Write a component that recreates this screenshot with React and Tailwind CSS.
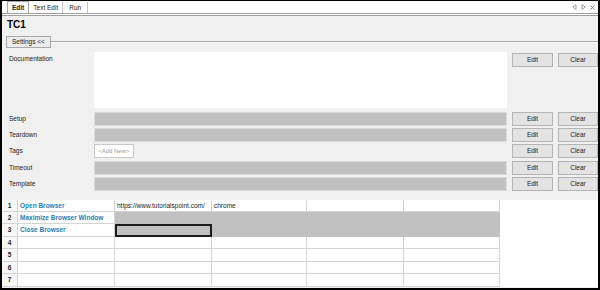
import React from 'react';

const cols = ['w-[97px]', 'w-[97px]', 'w-[95px]', 'w-[97px]', 'w-[96px]'];
const heights = ['h-[12px]', 'h-[12px]', 'h-[13px]', 'h-[12px]', 'h-[13px]', 'h-[12px]', 'h-[13px]'];
const rows = [
  ['Open Browser', 'https://www.tutorialspoint.com/', 'chrome', '', ''],
  ['Maximize Browser Window', '', '', '', ''],
  ['Close Browser', '', '', '', ''],
  ['', '', '', '', ''],
  ['', '', '', '', ''],
  ['', '', '', '', ''],
  ['', '', '', '', ''],
];

function Btn({ children }) {
  return (
    <div className="h-[14px] flex items-center justify-center bg-[#e3e3e3] border border-[#b4b4b4] text-[6.5px] text-[#222]">
      {children}
    </div>
  );
}

function FieldRow({ label, mt, children, tall }) {
  return (
    <div className={`flex ${mt}`}>
      <div className="w-[85px] ml-[7px] pt-[3px] leading-[8px]">{label}</div>
      <div className="w-[414px]">{children}</div>
      <div className={`flex gap-[5px] ml-[5px] ${tall ? 'pt-[1px]' : ''}`}>
        <div className="w-[41px]"><Btn>Edit</Btn></div>
        <div className="w-[40px]"><Btn>Clear</Btn></div>
      </div>
    </div>
  );
}

function GrayField() {
  return <div className="h-[14px] bg-[#c1c1c1] border border-[#dadada]" />;
}

export default function App() {
  return (
    <div className="w-[600px] h-[290px] bg-[#f0f0f0] border-t border-l-2 border-r-2 border-b-2 border-black flex flex-col overflow-hidden text-[6.5px] text-[#222] font-['Liberation_Sans',Arial,sans-serif]">
      {/* tab bar */}
      <div className="h-[12px] bg-white flex items-end pl-[5px] pr-[3px]">
        <div className="h-[12px] px-[4px] flex items-center font-bold border border-b-0 border-[#a8a8a8] bg-[#fafafa]">Edit</div>
        <div className="h-[11px] px-[4px] flex items-center border-r border-[#c4c4c4]">Text Edit</div>
        <div className="h-[11px] px-[6px] flex items-center border-r border-[#c4c4c4]">Run</div>
        <div className="flex-1" />
        <div className="h-[12px] flex items-center gap-[4px] text-[#8a8a8a]">
          <svg width="5" height="6" viewBox="0 0 5 6"><path d="M4 0.5 L0.8 3 L4 5.5 Z" fill="none" stroke="#8a8a8a" strokeWidth="0.8" /></svg>
          <svg width="5" height="6" viewBox="0 0 5 6"><path d="M1 0.5 L4.2 3 L1 5.5 Z" fill="none" stroke="#8a8a8a" strokeWidth="0.8" /></svg>
          <svg width="5" height="5" viewBox="0 0 5 5"><path d="M0.5 0.5 L4.5 4.5 M4.5 0.5 L0.5 4.5" stroke="#777" strokeWidth="0.9" /></svg>
        </div>
      </div>
      <div className="h-[3px] border-t border-b border-[#a0a0a0] bg-white" />

      {/* title */}
      <div className="pl-[5px] pt-[3px] h-[20px] text-[10px] font-bold text-black leading-[11px]">TC1</div>

      {/* settings */}
      <div className="flex items-center pl-[4px]">
        <div className="h-[12px] px-[5px] flex items-center border border-[#a8a8a8] bg-[#ececec]">Settings &lt;&lt;</div>
        <div className="flex-1 h-[2px] border-t border-[#a8a8a8] bg-white" />
      </div>

      {/* fields */}
      <FieldRow label="Documentation" mt="mt-[4px]" tall>
        <div className="h-[56px] bg-white" />
      </FieldRow>
      <FieldRow label="Setup" mt="mt-[4px]"><GrayField /></FieldRow>
      <FieldRow label="Teardown" mt="mt-[2px]"><GrayField /></FieldRow>
      <FieldRow label="Tags" mt="mt-[2px]">
        <div className="h-[14px] w-[40px] bg-white border border-[#c8c8c8] flex items-center justify-center text-[#9a9a9a] text-[6px]">&lt;Add New&gt;</div>
      </FieldRow>
      <FieldRow label="Timeout" mt="mt-[3px]"><GrayField /></FieldRow>
      <FieldRow label="Template" mt="mt-[2px]"><GrayField /></FieldRow>

      {/* test table */}
      <div className="mt-[9px] bg-white flex flex-col">
        {rows.map((r, i) => (
          <div key={i} className={`flex ${heights[i]}`}>
            <div className="w-[16px] shrink-0 flex items-center justify-center font-bold border-r border-b border-[#d4d4d4] bg-[#f7f7f7]">{i + 1}</div>
            {r.map((c, j) => {
              const gray = (i === 1 || i === 2) && j > 0;
              const sel = i === 2 && j === 1;
              return (
                <div
                  key={j}
                  className={`${cols[j]} shrink-0 flex items-center px-[2px] whitespace-nowrap overflow-hidden ${gray ? 'bg-[#c1c1c1]' : 'border-r border-b border-[#d4d4d4]'} ${sel ? 'border-2 border-[#1b1b1b]' : ''} ${j === 0 ? 'font-bold text-[#2b7db6]' : ''}`}
                >
                  {c}
                </div>
              );
            })}
            <div className="flex-1" />
          </div>
        ))}
      </div>
    </div>
  );
}
